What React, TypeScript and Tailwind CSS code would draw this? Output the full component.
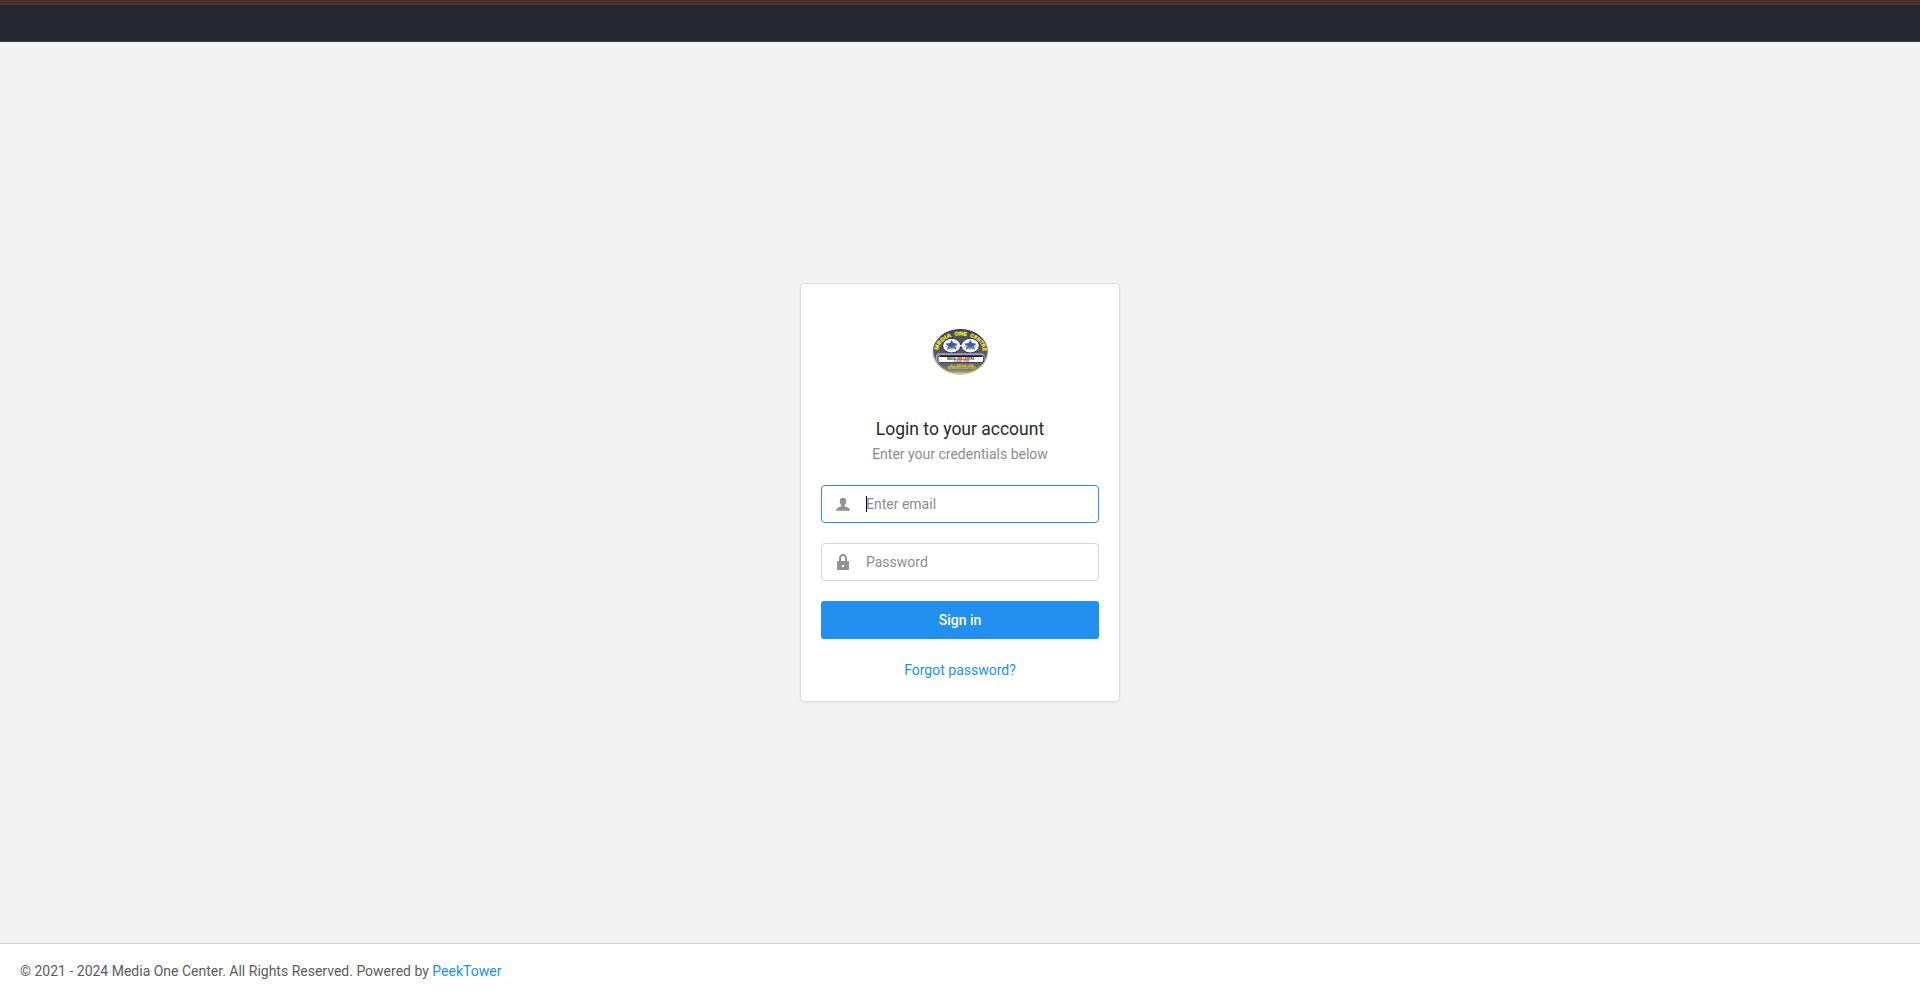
function Logo() {
  return (
    <svg className="h-[50px] w-[60px]" viewBox="0 0 180 150" aria-label="Media One Centre">
      <defs>
        <linearGradient id="disc" x1="0" y1="0" x2="0" y2="1">
          <stop offset="0" stopColor="#4d4d52" />
          <stop offset="0.75" stopColor="#5c5c5c" />
          <stop offset="0.92" stopColor="#838383" />
          <stop offset="1" stopColor="#d0d0c0" />
        </linearGradient>
        <linearGradient id="rim" x1="0" y1="0" x2="0" y2="1">
          <stop offset="0" stopColor="#24247c" />
          <stop offset="0.45" stopColor="#66669a" />
          <stop offset="0.65" stopColor="#b8b8b4" />
          <stop offset="1" stopColor="#dcd858" />
        </linearGradient>
        <path id="arc" d="M24 72 A67 47 0 0 1 158 72" />
      </defs>
      <ellipse cx="91" cy="75" rx="81" ry="67" fill="url(#disc)" stroke="url(#rim)" strokeWidth="4" />
      <g
        fill="#f4f01c"
        stroke="#f4f01c"
        strokeWidth="0.8"
        fontSize="16"
        fontWeight="700"
        fontFamily="'Liberation Sans', Arial, sans-serif"
      >
        <text textLength="61" lengthAdjust="spacingAndGlyphs">
          <textPath href="#arc" startOffset="2">MEDIA</textPath>
        </text>
        <text textLength="36" lengthAdjust="spacingAndGlyphs">
          <textPath href="#arc" startOffset="73">ONE</textPath>
        </text>
        <text textLength="62" lengthAdjust="spacingAndGlyphs">
          <textPath href="#arc" startOffset="119">CENTRE</textPath>
        </text>
      </g>
      <g fill="#fff" stroke="#2020a0" strokeWidth="3">
        <ellipse cx="65" cy="56" rx="27" ry="22" />
        <ellipse cx="121" cy="56" rx="27" ry="22" />
      </g>
      <path d="M88 56h10" stroke="#fff" strokeWidth="5" />
      <g fill="#315fae">
        <path d="M65 38l5 10 14 2-9 7 5 11-15-6-15 6 5-11-9-7 14-2z" />
        <path d="M121 38l5 10 14 2-9 7 5 11-15-6-15 6 5-11-9-7 14-2z" />
      </g>
      <g fill="none" stroke="#a39080" strokeWidth="3">
        <path d="M47 60q7-8 12 0t12 0 12 0M53 67l6-4 6 4 6-4 6 4" />
        <path d="M103 60q7-8 12 0t12 0 12 0M109 67l6-4 6 4 6-4 6 4" />
      </g>
      <rect x="18" y="79" width="146" height="30" rx="10" fill="#a6a6aa" />
      <rect x="24" y="86" width="137" height="21" rx="5" fill="#fff" stroke="#24246e" strokeWidth="3" />
      <path d="M29 88h127" stroke="#182018" strokeWidth="4" />
      <g fontFamily="'Liberation Sans', Arial, sans-serif" fontWeight="700" textAnchor="middle">
        <text x="92" y="98" fontSize="8" fill="#333" textLength="82" lengthAdjust="spacingAndGlyphs">MEDIA ONE CENTRE</text>
        <text x="95" y="105" fontSize="8" fill="#e04a18" textLength="47" lengthAdjust="spacingAndGlyphs">CENTRE</text>
        <text x="95" y="119" fontSize="8" fill="#d8cf30" textLength="72" lengthAdjust="spacingAndGlyphs">ALL MEDIA ONE</text>
        <text x="95" y="126" fontSize="8" fill="#d8cf30" textLength="84" lengthAdjust="spacingAndGlyphs">BUSINESS SOLUTIONS</text>
      </g>
    </svg>
  );
}

function UserIcon() {
  return (
    <svg className="h-4 w-4" viewBox="0 0 16 16" fill="#929292">
      <path d="M8 1.800c2.200 0 3.200 1.200 3.200 3.200 0 2-.8 3.500-1.700 4.200v1.100c2.700.4 5.200 1.700 5.500 4.500H1c.3-2.800 2.800-4.100 5.500-4.500V9.200C5.600 8.500 4.800 7 4.800 5c0-2 1-3.200 3.200-3.200z" />
    </svg>
  );
}

function LockIcon() {
  return (
    <svg className="h-4 w-4" viewBox="0 0 16 16" fill="#929292">
      <path fillRule="evenodd" d="M13 7h-1V4.500C12 2 10.400 0 8 0S4 2 4 4.500V7H3c-.6 0-1 .4-1 1v7c0 .6.4 1 1 1h10c.6 0 1-.4 1-1V8c0-.6-.4-1-1-1zM6 4.500C6 3 6.700 2 8 2s2 1 2 2.500V7H6zM7 11h2v2H7z" />
    </svg>
  );
}

export default function App() {
  return (
    <div className="flex h-[998px] flex-col bg-[#f3f3f3] font-['Roboto',sans-serif] text-[14px] leading-[22px] text-[#333]">
      <div className="h-[5px] shrink-0 border-b border-[#4c3b38] bg-[#4b2f2c]" />
      <header className="h-[37px] shrink-0 border-b border-[#363b43] bg-[#242830]" />

      <main className="flex flex-1 items-center justify-center">
        <form className="flex h-[419px] w-[320px] flex-col rounded-[4px] border border-[#dcdcdc] bg-white px-5 shadow-[0_1px_2px_rgba(0,0,0,0.05)]">
          <div className="mt-[43px] flex justify-center">
            <Logo />
          </div>
          <h1 className="mt-[40px] text-center text-[17.5px] leading-6 text-[#292929]">Login to your account</h1>
          <p className="mt-[2px] text-center text-[#8c8c8c]">Enter your credentials below</p>

          <label className="mt-5 flex h-[38px] shrink-0 items-center rounded-[4px] border border-[#2490ee] pl-[13px]">
            <UserIcon />
            <span className="ml-[15px] h-4 w-px bg-black" />
            <input className="-ml-px w-[200px] bg-transparent outline-none placeholder:text-[#8c8c8c]" placeholder="Enter email" />
          </label>
          <label className="mt-5 flex h-[38px] shrink-0 items-center rounded-[4px] border border-[#d7d7d7] pl-[13px]">
            <LockIcon />
            <input type="password" className="ml-[15px] w-[200px] bg-transparent outline-none placeholder:text-[#8c8c8c]" placeholder="Password" />
          </label>
          <button type="button" className="mt-5 h-[38px] shrink-0 rounded-[3px] bg-[#2190ee] font-medium text-white">
            Sign in
          </button>
          <a className="mt-5 text-center text-[#2190ee]" href="#">
            Forgot password?
          </a>
        </form>
      </main>

      <footer className="h-[55px] shrink-0 border-t border-[#d5d5d5] bg-white px-5 pt-4 text-[#5c5c5c]">
        © 2021 - 2024 Media One Center. All Rights Reserved. Powered by{" "}
        <a className="text-[#2190ee]" href="#">
          PeekTower
        </a>
      </footer>
    </div>
  );
}
